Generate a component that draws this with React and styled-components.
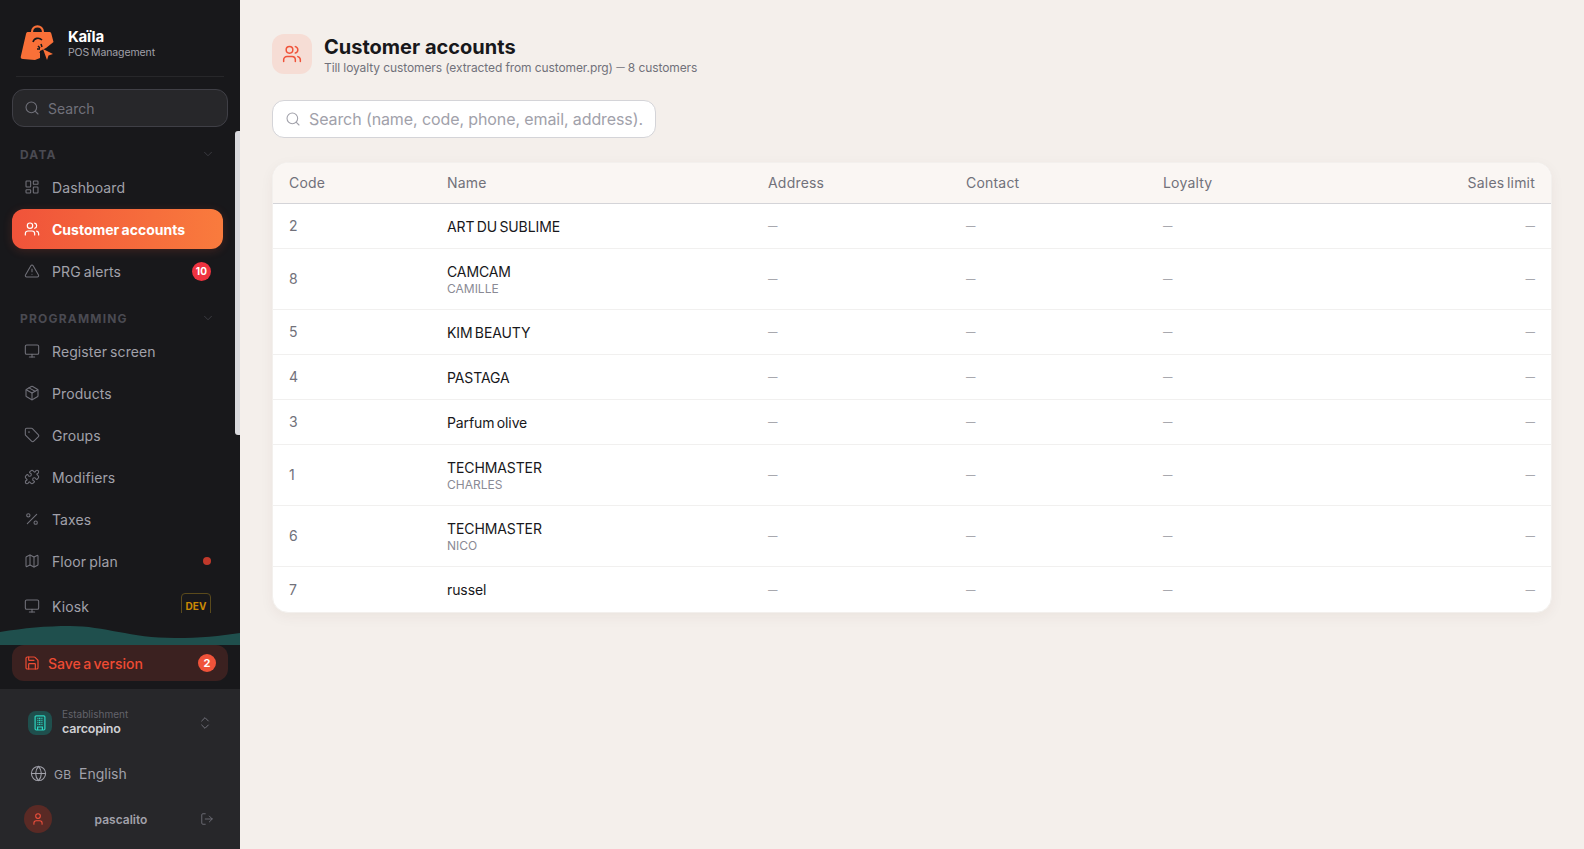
import React from "react";
import styled, { createGlobalStyle } from "styled-components";
import {
  Search, ChevronDown, LayoutDashboard, Users, TriangleAlert, Monitor, Package, Tag,
  Puzzle, Percent, Map as MapIcon, Save, ChevronsUpDown, Globe, User, LogOut,
} from "lucide-react";

const Global = createGlobalStyle`
  html, body { margin: 0; padding: 0; height: 100%; overflow: hidden; background: #f4efeb; }
  body { font-family: Inter, "Noto Sans", sans-serif; }
  #root { height: 100%; }
  * { box-sizing: border-box; }
`;

const Shell = styled.div`
  display: flex;
  height: 849px;
  width: 1584px;
  overflow: hidden;
`;

const Sidebar = styled.aside`
  position: relative;
  width: 240px;
  flex: none;
  display: flex;
  flex-direction: column;
  background: #18181b;
`;

const Brand = styled.div`
  display: flex;
  align-items: center;
  gap: 14px;
  margin: 0 16px;
  padding: 16px 4px 7px;
  height: 77px;
  border-bottom: 1px solid #27272a;
`;

const BrandText = styled.div`
  display: flex;
  flex-direction: column;
  margin-top: 4px;
`;

const BrandName = styled.span`
  color: #fff;
  font-size: 15px;
  font-weight: 700;
  line-height: 17px;
  letter-spacing: -0.2px;
`;

const BrandSub = styled.span`
  color: #a1a1aa;
  font-size: 10.5px;
  line-height: 16px;
  word-spacing: -1px;
  letter-spacing: -0.1px;
`;

const SideSearch = styled.div`
  display: flex;
  align-items: center;
  gap: 8px;
  margin: 12px 12px 0;
  height: 38px;
  padding: 0 11px;
  border: 1px solid #3f3f46;
  border-radius: 12px;
  background: #27272a;
  color: #71717a;
  font-size: 14px;
`;

const Nav = styled.nav`
  flex: 1;
  min-height: 0;
  overflow: hidden;
  margin-top: 4px;
  padding: 0 17px 0 12px;
`;

const ScrollThumb = styled.div`
  position: absolute;
  top: 131px;
  right: 0;
  width: 5px;
  height: 304px;
  border-radius: 3px 0 0 3px;
  background: #d9d9dd;
`;

const SectionHead = styled.div`
  display: flex;
  align-items: center;
  justify-content: space-between;
  height: ${(p) => (p.$first ? "34px" : "38px")};
  padding: ${(p) => (p.$first ? "12px" : "16px")} 8px 0 8px;
  color: #4a4a52;
  font-size: 12px;
  font-weight: 700;
  letter-spacing: 1.2px;
`;

const Item = styled.div`
  display: flex;
  align-items: center;
  gap: 12px;
  height: 40px;
  margin-top: 2px;
  padding: 0 12px;
  border-radius: 12px;
  font-size: 14px;
  font-weight: ${(p) => (p.$active ? 700 : 400)};
  letter-spacing: ${(p) => (p.$active ? "0" : "0.1px")};
  color: ${(p) => (p.$active ? "#fff" : "#a1a1aa")};
  background: ${(p) => (p.$active ? "linear-gradient(90deg, #f0533a, #f97b3d)" : "transparent")};
  box-shadow: ${(p) => (p.$active ? "0 2px 10px rgba(240,83,58,.18)" : "none")};
  word-spacing: -1px;
  & > svg { flex: none; color: ${(p) => (p.$active ? "#fff" : "#71717a")}; }
`;

const ItemLabel = styled.span`
  flex: 1;
`;

const CountBadge = styled.span`
  width: 19px;
  height: 19px;
  border-radius: 50%;
  background: #ef3340;
  color: #fff;
  font-size: 10px;
  font-weight: 700;
  display: flex;
  align-items: center;
  justify-content: center;
`;

const Dot = styled.span`
  width: 8px;
  height: 8px;
  border-radius: 50%;
  background: #c0392b;
`;

const KioskRow = styled(Item)`
  height: 50px;
  margin-top: 0;
`;

const DevBadge = styled.span`
  height: 26px;
  width: 30px;
  border: 1px solid #5a4a1c;
  border-radius: 4px;
  color: #ca8a04;
  font-size: 10px;
  font-weight: 700;
  letter-spacing: 0;
  display: flex;
  align-items: center;
  justify-content: center;
`;

const Wave = styled.svg`
  display: block;
  flex: none;
  width: 240px;
  height: 32px;
`;

const SaveWrap = styled.div`
  flex: none;
  padding: 0 12px 8px;
`;

const SaveButton = styled.div`
  display: flex;
  align-items: center;
  gap: 8px;
  height: 36px;
  padding: 0 12px;
  border-radius: 12px;
  background: #3b2120;
  color: #ee4b33;
  font-size: 14px;
  font-weight: 500;
  word-spacing: -1.3px;
`;

const SaveCount = styled.span`
  width: 18px;
  height: 18px;
  border-radius: 50%;
  background: #f0533a;
  color: #fff;
  font-size: 11px;
  font-weight: 700;
  display: flex;
  align-items: center;
  justify-content: center;
`;

const Footer = styled.div`
  flex: none;
  height: 160px;
  background: #27272a;
  display: flex;
  flex-direction: column;
`;

const Establishment = styled.div`
  display: flex;
  align-items: center;
  gap: 10px;
  height: 24px;
  margin-top: 22px;
  padding: 0 27px 0 28px;
`;

const EstIcon = styled.span`
  width: 24px;
  height: 24px;
  flex: none;
  border-radius: 8px;
  background: #1f4f4d;
  color: #2dd4bf;
  display: flex;
  align-items: center;
  justify-content: center;
`;

const EstText = styled.div`
  flex: 1;
  display: flex;
  flex-direction: column;
  margin-bottom: 3px;
`;

const EstLabel = styled.span`
  color: #63636b;
  font-size: 10px;
  line-height: 14px;
`;

const EstValue = styled.span`
  color: #cfcfd3;
  font-size: 12.5px;
  font-weight: 600;
  line-height: 15px;
  letter-spacing: -0.2px;
`;

const Lang = styled.div`
  display: flex;
  align-items: center;
  height: 24px;
  margin-top: 26px;
  padding-left: 30px;
  color: #a1a1aa;
  font-size: 14px;
  & > svg { flex: none; margin-right: 7px; }
`;

const LangCode = styled.span`
  font-size: 12px;
  width: 25px;
  margin-top: 2px;
  letter-spacing: 0.3px;
`;

const UserRow = styled.div`
  display: flex;
  align-items: center;
  margin-top: 20px;
  padding: 0 26px 0 24px;
  color: #71717a;
`;

const Avatar = styled.span`
  width: 28px;
  height: 28px;
  flex: none;
  border-radius: 50%;
  background: #5a2a25;
  color: #ef4f3c;
  display: flex;
  align-items: center;
  justify-content: center;
`;

const UserName = styled.span`
  flex: 1;
  padding-right: 10px;
  text-align: center;
  color: #a1a1aa;
  font-size: 12px;
  font-weight: 600;
`;

const Main = styled.main`
  flex: 1;
  min-width: 0;
  padding: 34px 32px 0;
  background: #f4efeb;
`;

const PageHead = styled.header`
  display: flex;
  align-items: center;
  gap: 12px;
  height: 40px;
`;

const HeadIcon = styled.span`
  width: 40px;
  height: 40px;
  border-radius: 12px;
  background: #f6ddd5;
  color: #f0533a;
  display: flex;
  align-items: center;
  justify-content: center;
`;

const HeadText = styled.div`
  display: flex;
  flex-direction: column;
  padding-top: 3px;
`;

const Title = styled.h1`
  margin: 0;
  color: #18181b;
  font-size: 20px;
  font-weight: 700;
  line-height: 24px;
`;

const Subtitle = styled.p`
  margin: 0;
  color: #71717a;
  font-size: 12px;
  line-height: 16px;
  letter-spacing: -0.1px;
`;

const SubtitleDash = styled.span`
  font-size: 8.5px;
  vertical-align: 1.5px;
`;

const SearchBox = styled.label`
  display: flex;
  align-items: center;
  gap: 8px;
  width: 384px;
  height: 38px;
  margin-top: 26px;
  padding: 0 12px;
  border: 1px solid #d4d4d8;
  border-radius: 12px;
  background: #fff;
  color: #a1a1aa;
`;

const SearchInput = styled.input`
  flex: 1;
  min-width: 0;
  border: 0;
  outline: 0;
  padding: 0;
  background: transparent;
  font: inherit;
  font-size: 16px;
  letter-spacing: -0.1px;
  color: #18181b;
  &::placeholder { color: #a1a1aa; opacity: 1; }
`;

const Card = styled.div`
  margin-top: 24px;
  border: 1px solid #f3f0ed;
  border-radius: 16px;
  background: #fff;
  overflow: hidden;
  box-shadow: 0 4px 14px rgba(70, 40, 20, 0.05);
`;

const Table = styled.table`
  width: 100%;
  border-collapse: collapse;
  table-layout: fixed;
  font-size: 14px;
`;

const Th = styled.th`
  height: 40px;
  padding: 0 16px;
  background: #faf6f3;
  border-bottom: 1px solid #d4d4d8;
  color: #71717a;
  font-weight: 400;
  letter-spacing: 0.2px;
  word-spacing: -1.5px;
  text-align: ${(p) => (p.$right ? "right" : "left")};
`;

const Tr = styled.tr`
  & + & > td { border-top: 1px solid #f1f0ef; }
  &:last-child > td { height: 46px; }
`;

const Td = styled.td`
  height: ${(p) => (p.$tall ? "61px" : "45px")};
  padding: ${(p) => (p.$strong ? "2px" : "0")} 16px 0;
  color: ${(p) => (p.$strong ? "#18181b" : "#71717a")};
  text-align: ${(p) => (p.$right ? "right" : "left")};
`;

const Dash = styled.span`
  color: #94949c;
  font-size: 9.5px;
  vertical-align: 2px;
`;

const Sub = styled.div`
  color: #8a8a94;
  font-size: 12px;
  line-height: 16px;
`;

const Name = styled.div`
  line-height: 18px;
  letter-spacing: -0.1px;
  word-spacing: -1.5px;
`;

const Logo = () => (
  <svg width="34" height="38" viewBox="0 0 34 38" style={{ flex: "none" }}>
    <path d="M12 8 C12 0.5 23 0.5 23 8" fill="none" stroke="#f97038" strokeWidth="2.2" />
    <path d="M7.5 8 H29.5 C30.5 8 31 8.6 31.3 9.5 L33.5 18 L26 24 L20 27 L20 34 L15 36 L3 35 C1 34.8 0.5 34 0.8 32.5 L6 10 C6.2 9 6.7 8 7.5 8 Z" fill="#f97038" />
    <path d="M13 18 C14 14 19 13 22 16" fill="none" stroke="#18181b" strokeWidth="1.6" />
    <path d="M23 25 L33 30 L28.5 31.5 L27 36 Z" fill="#f97038" />
    <path d="M21 20 l1 3 M17 25 l3 0 M21 27 l-1 2 M18 22 l2 2" stroke="#18181b" strokeWidth="1.5" />
  </svg>
);

const TerminalIcon = () => (
  <svg width="14" height="16" viewBox="0 0 14 16" fill="none" stroke="currentColor" strokeWidth="1.2">
    <rect x="2.1" y="0.8" width="9.8" height="14.2" rx="1.2" />
    <path d="M4.4 3.4h5.2M4.4 5.4h5.2M4.4 7.4h5.2M4.4 9.4h5.2" strokeDasharray="1 0.6" />
    <path d="M4.6 15v-3h4.8v3" />
  </svg>
);

const navData = [
  { icon: Monitor, label: "Register screen" },
  { icon: Package, label: "Products" },
  { icon: Tag, label: "Groups" },
  { icon: Puzzle, label: "Modifiers" },
  { icon: Percent, label: "Taxes" },
];

const rows = [
  ["2", "ART DU SUBLIME"],
  ["8", "CAMCAM", "CAMILLE"],
  ["5", "KIM BEAUTY"],
  ["4", "PASTAGA"],
  ["3", "Parfum olive"],
  ["1", "TECHMASTER", "CHARLES"],
  ["6", "TECHMASTER", "NICO"],
  ["7", "russel"],
];

export default function App() {
  return (
    <Shell>
      <Global />
      <Sidebar>
        <Brand>
          <Logo />
          <BrandText>
            <BrandName>Kaïla</BrandName>
            <BrandSub>POS Management</BrandSub>
          </BrandText>
        </Brand>
        <SideSearch>
          <Search size={16} strokeWidth={1.6} />
          <span>Search</span>
        </SideSearch>
        <Nav>
          <SectionHead $first>
            <span>DATA</span>
            <ChevronDown size={14} strokeWidth={1.5} color="#3f3f46" />
          </SectionHead>
          <Item>
            <LayoutDashboard size={16} strokeWidth={1.6} />
            <ItemLabel>Dashboard</ItemLabel>
          </Item>
          <Item $active>
            <Users size={16} strokeWidth={1.8} />
            <ItemLabel>Customer accounts</ItemLabel>
          </Item>
          <Item>
            <TriangleAlert size={16} strokeWidth={1.6} />
            <ItemLabel>PRG alerts</ItemLabel>
            <CountBadge>10</CountBadge>
          </Item>
          <SectionHead>
            <span>PROGRAMMING</span>
            <ChevronDown size={14} strokeWidth={1.5} color="#3f3f46" />
          </SectionHead>
          {navData.map((n) => (
            <Item key={n.label}>
              <n.icon size={16} strokeWidth={1.6} />
              <ItemLabel>{n.label}</ItemLabel>
            </Item>
          ))}
          <Item>
            <MapIcon size={16} strokeWidth={1.6} />
            <ItemLabel>Floor plan</ItemLabel>
            <Dot />
          </Item>
          <KioskRow>
            <Monitor size={16} strokeWidth={1.6} />
            <ItemLabel>Kiosk</ItemLabel>
            <DevBadge>DEV</DevBadge>
          </KioskRow>
        </Nav>
        <ScrollThumb />
        <Wave viewBox="0 0 240 32" preserveAspectRatio="none">
          <path d="M0 19 C25 15 45 13 70 13 C105 13 130 25 175 25 C200 25 220 23 240 20 V32 H0 Z" fill="#1f4f4d" />
        </Wave>
        <SaveWrap>
          <SaveButton>
            <Save size={16} strokeWidth={1.8} />
            <ItemLabel>Save a version</ItemLabel>
            <SaveCount>2</SaveCount>
          </SaveButton>
        </SaveWrap>
        <Footer>
          <Establishment>
            <EstIcon>
              <TerminalIcon />
            </EstIcon>
            <EstText>
              <EstLabel>Establishment</EstLabel>
              <EstValue>carcopino</EstValue>
            </EstText>
            <ChevronsUpDown size={16} strokeWidth={1.5} color="#71717a" />
          </Establishment>
          <Lang>
            <Globe size={17} strokeWidth={1.5} />
            <LangCode>GB</LangCode>
            <span>English</span>
          </Lang>
          <UserRow>
            <Avatar>
              <User size={14} strokeWidth={1.8} />
            </Avatar>
            <UserName>pascalito</UserName>
            <LogOut size={14} strokeWidth={1.5} />
          </UserRow>
        </Footer>
      </Sidebar>
      <Main>
        <PageHead>
          <HeadIcon>
            <Users size={20} strokeWidth={1.8} />
          </HeadIcon>
          <HeadText>
            <Title>Customer accounts</Title>
            <Subtitle>
              Till loyalty customers (extracted from customer.prg) <SubtitleDash>—</SubtitleDash> 8 customers
            </Subtitle>
          </HeadText>
        </PageHead>
        <SearchBox>
          <Search size={16} strokeWidth={1.6} />
          <SearchInput placeholder="Search (name, code, phone, email, address)..." />
        </SearchBox>
        <Card>
          <Table>
            <colgroup>
              <col style={{ width: 158 }} />
              <col style={{ width: 321 }} />
              <col style={{ width: 198 }} />
              <col style={{ width: 197 }} />
              <col />
            </colgroup>
            <thead>
              <tr>
                <Th>Code</Th>
                <Th>Name</Th>
                <Th>Address</Th>
                <Th>Contact</Th>
                <Th>Loyalty</Th>
                <Th $right>Sales limit</Th>
              </tr>
            </thead>
            <tbody>
              {rows.map(([code, name, sub]) => (
                <Tr key={code}>
                  <Td $tall={!!sub}>{code}</Td>
                  <Td $strong>
                    <Name>{name}</Name>
                    {sub && <Sub>{sub}</Sub>}
                  </Td>
                  <Td><Dash>—</Dash></Td>
                  <Td><Dash>—</Dash></Td>
                  <Td><Dash>—</Dash></Td>
                  <Td $right><Dash>—</Dash></Td>
                </Tr>
              ))}
            </tbody>
          </Table>
        </Card>
      </Main>
    </Shell>
  );
}
